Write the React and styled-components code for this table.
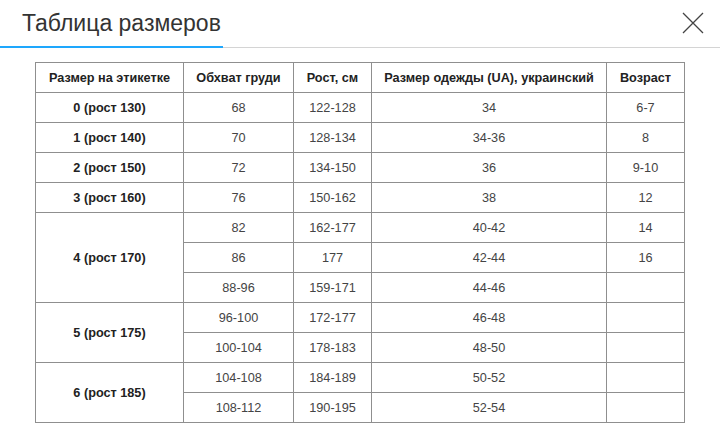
import React from "react";
import styled, { createGlobalStyle } from "styled-components";

const GlobalStyle = createGlobalStyle`
  html, body {
    margin: 0;
    padding: 0;
    background: #fff;
  }
  body {
    font-family: "Liberation Sans", Arial, sans-serif;
    color: #333;
  }
`;

const Modal = styled.div`
  width: 720px;
  height: 435px;
  background: #fff;
  overflow: hidden;
`;

const Header = styled.div`
  display: flex;
  align-items: flex-end;
  justify-content: space-between;
  height: 47px;
  border-bottom: 1px solid #d4d4d4;
`;

const Title = styled.h2`
  margin: 0 0 -1px;
  width: 223px;
  box-sizing: border-box;
  padding: 0 0 10px 22px;
  font-weight: normal;
  font-size: 23px;
  line-height: 26px;
  color: #333;
  border-bottom: 2px solid #1ea7fd;
`;

const Close = styled.button`
  align-self: flex-start;
  margin: 11px 15px 0 0;
  width: 24px;
  height: 24px;
  padding: 0;
  border: none;
  background: none;
  cursor: pointer;

  &:focus {
    outline: none;
  }
`;

const Body = styled.div`
  padding-top: 14px;
`;

const Table = styled.table`
  width: 649px;
  margin: 0 auto;
  border-collapse: collapse;
  table-layout: fixed;
  font-size: 12.7px;
  color: #333;
`;

const Cell = styled.td`
  height: 28px;
  padding: 1px 4px 0;
  border: 1px solid #8f8f8f;
  text-align: center;
  font-weight: ${(props) => (props.bold ? "bold" : "normal")};
  color: ${(props) => (props.bold ? "#222" : "#444")};
`;

const HeadCell = styled.th`
  height: 28px;
  padding: 1px 4px 0;
  border: 1px solid #8f8f8f;
  text-align: center;
  font-weight: bold;
  color: #222;
`;

const columns = [
  { title: "Размер на этикетке", width: 148 },
  { title: "Обхват груди", width: 110 },
  { title: "Рост, см", width: 78 },
  { title: "Размер одежды (UA), украинский", width: 235 },
  { title: "Возраст", width: 78 },
];

const groups = [
  { label: "0 (рост 130)", rows: [["68", "122-128", "34", "6-7"]] },
  { label: "1 (рост 140)", rows: [["70", "128-134", "34-36", "8"]] },
  { label: "2 (рост 150)", rows: [["72", "134-150", "36", "9-10"]] },
  { label: "3 (рост 160)", rows: [["76", "150-162", "38", "12"]] },
  {
    label: "4 (рост 170)",
    rows: [
      ["82", "162-177", "40-42", "14"],
      ["86", "177", "42-44", "16"],
      ["88-96", "159-171", "44-46", ""],
    ],
  },
  {
    label: "5 (рост 175)",
    rows: [
      ["96-100", "172-177", "46-48", ""],
      ["100-104", "178-183", "48-50", ""],
    ],
  },
  {
    label: "6 (рост 185)",
    rows: [
      ["104-108", "184-189", "50-52", ""],
      ["108-112", "190-195", "52-54", ""],
    ],
  },
];

export default function App() {
  return (
    <Modal>
      <GlobalStyle />
      <Header>
        <Title>Таблица размеров</Title>
        <Close aria-label="Закрыть">
          <svg width="24" height="24" viewBox="0 0 24 24">
            <path d="M2 2 L22 22 M22 2 L2 22" stroke="#444" strokeWidth="1.3" fill="none" />
          </svg>
        </Close>
      </Header>
      <Body>
        <Table>
          <colgroup>
            {columns.map((c) => (
              <col key={c.title} style={{ width: c.width }} />
            ))}
          </colgroup>
          <thead>
            <tr>
              {columns.map((c) => (
                <HeadCell key={c.title}>{c.title}</HeadCell>
              ))}
            </tr>
          </thead>
          <tbody>
            {groups.map((g) =>
              g.rows.map((r, i) => (
                <tr key={g.label + i}>
                  {i === 0 && (
                    <Cell bold rowSpan={g.rows.length}>
                      {g.label}
                    </Cell>
                  )}
                  {r.map((v, j) => (
                    <Cell key={j}>{v}</Cell>
                  ))}
                </tr>
              ))
            )}
          </tbody>
        </Table>
      </Body>
    </Modal>
  );
}
